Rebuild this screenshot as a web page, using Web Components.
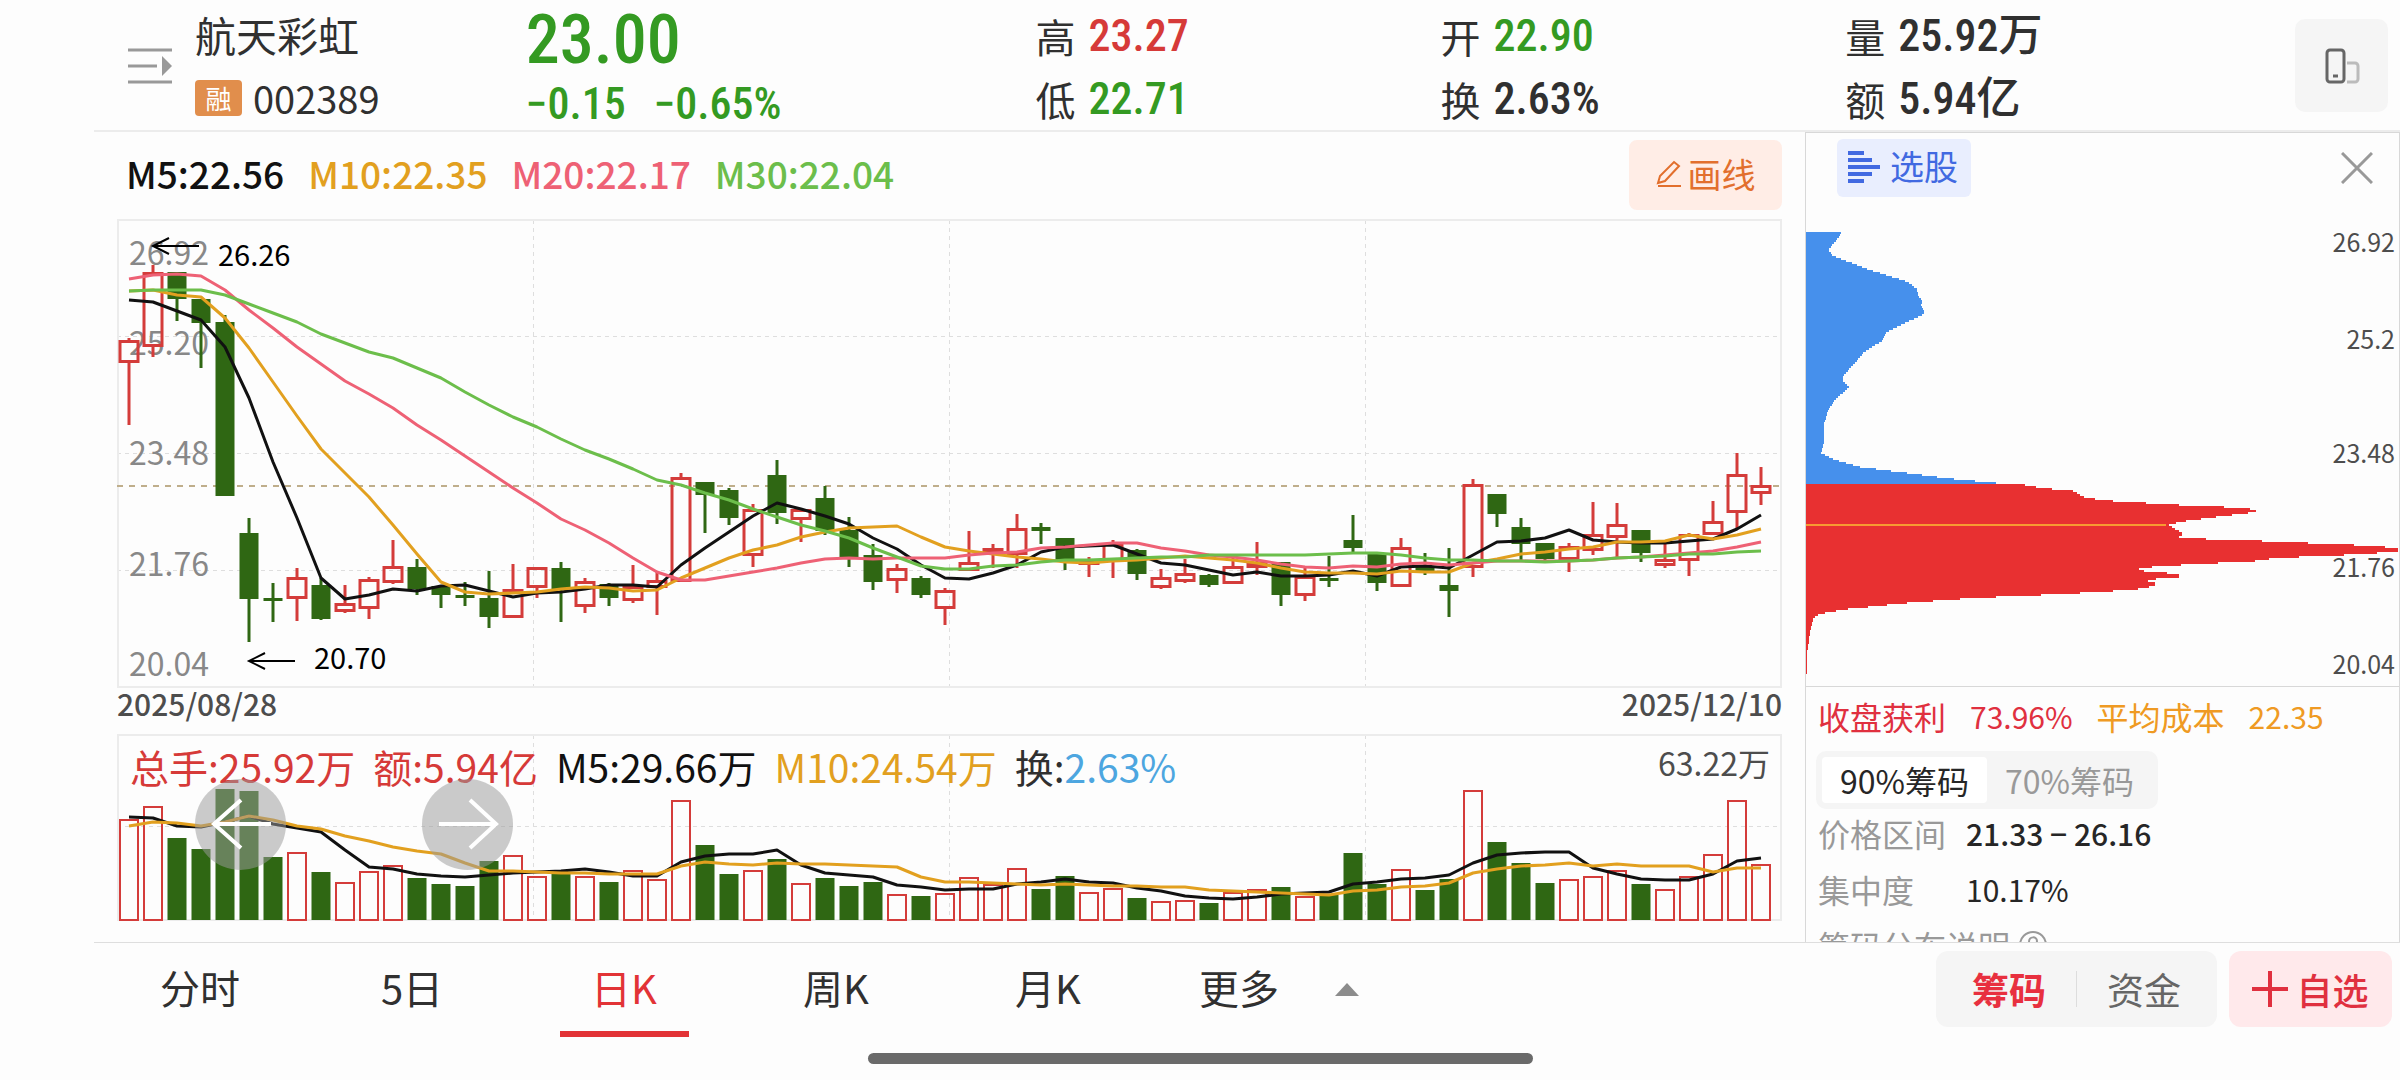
<!DOCTYPE html>
<html lang="zh-CN">
<head>
<meta charset="utf-8">
<meta name="viewport" content="width=device-width, initial-scale=1">
<title>航天彩虹 002389</title>
<style>
    html, body {
        margin: 0;
        height: 100%;
        background: #fdfdfd;
    }
    body {
        --up: #d63a38;
        --down: #349a22;
        --ma5: #111;
        --ma10: #e2a01f;
        --ma20: #ee6175;
        --ma30: #6cbe4b;
        --line: #ececec;
        --text: #303030;
        --num: "Roboto Condensed", "Liberation Sans Narrow", "Noto Sans CJK SC", sans-serif;
        font-family: "Noto Sans CJK SC", sans-serif;
        color: var(--text);
    }
</style>
</head>
<body>
<stock-app>
    <quote-header slot="header" name="航天彩虹" code="002389" price="23.00" change="−0.15" percent="−0.65%">
        <quote-pair label="高" second="低"><span slot="first" class="up">23.27</span><span slot="second">22.71</span></quote-pair>
        <quote-pair label="开" second="换"><span slot="first">22.90</span><span slot="second" class="flat">2.63%</span></quote-pair>
        <quote-pair label="量" second="额"><span slot="first" class="flat">25.92万</span><span slot="second" class="flat">5.94亿</span></quote-pair>
    </quote-header>
    <chart-toolbar slot="charts">
        <span style="color: var(--ma5)">M5:22.56</span>
        <span style="color: var(--ma10)">M10:22.35</span>
        <span style="color: var(--ma20)">M20:22.17</span>
        <span style="color: var(--ma30)">M30:22.04</span>
    </chart-toolbar>
    <k-line-chart slot="charts"></k-line-chart>
    <date-range slot="charts" from="2025/08/28" to="2025/12/10"></date-range>
    <volume-chart slot="charts"></volume-chart>
    <chip-panel slot="aside"></chip-panel>
    <period-bar slot="footer"></period-bar>
</stock-app>

<script>
// One row per trading day: [direction, high, body top, body bottom, low], chart units from the top edge
const CANDLES = [
    ['r',118,120,143,205], ['r',45,52,127,137], ['g',52,52,79,101], ['g',79,79,103,148], ['g',95,102,276,276],
    ['g',298,313,379,422], ['g',363,378,381,402], ['r',348,357,379,401], ['g',358,365,399,400], ['r',365,383,392,393],
    ['r',357,359,389,399], ['r',320,346,363,364], ['g',339,347,369,375], ['g',366,366,375,388], ['g',362,375,378,386],
    ['g',351,378,397,408], ['r',344,369,398,398], ['r',347,347,368,378], ['g',342,348,369,402], ['r',358,361,387,393],
    ['g',363,364,378,386], ['r',345,366,381,383], ['r',352,360,368,395], ['r',253,257,362,362], ['g',262,262,275,313],
    ['g',268,270,298,305], ['r',284,289,336,347], ['g',240,255,293,304], ['r',289,289,300,322], ['g',266,278,311,315],
    ['g',297,310,338,347], ['g',324,335,362,370], ['r',344,348,361,373], ['g',356,358,375,378], ['r',368,370,389,405],
    ['r',311,342,351,351], ['r',324,328,331,348], ['r',294,308,335,348], ['g',303,307,311,324], ['g',318,318,340,350],
    ['r',337,341,344,357], ['r',320,323,342,358], ['g',329,330,354,360], ['r',349,357,368,369], ['r',339,353,362,363],
    ['g',354,355,365,367], ['r',337,346,364,364], ['r',322,342,348,355], ['g',342,342,375,386], ['r',348,356,376,381],
    ['g',336,358,361,367], ['g',295,320,328,332], ['g',334,334,363,371], ['r',318,327,367,367], ['g',333,347,353,355],
    ['g',328,365,371,397], ['r',259,264,348,357], ['g',274,274,294,307], ['g',298,307,324,340], ['g',323,323,339,341],
    ['r',323,326,340,352], ['r',282,314,331,335], ['r',283,304,318,337], ['g',310,310,333,342], ['r',323,339,346,348],
    ['r',313,314,341,356], ['r',281,301,315,315], ['r',233,254,293,308], ['r',247,265,274,285],
];

const PRICE_MA = {
    ma5: [80,82,91,100,127,178,242,298,358,379,375,369,371,366,365,371,377,373,372,369,365,365,367,345,328,312,296,283,289,296,304,318,329,345,358,359,353,345,332,327,326,325,334,343,345,350,355,352,356,356,355,351,356,347,346,348,335,322,321,318,310,320,322,323,323,321,319,309,295],
    ma10: [71,70,75,77,98,128,162,196,229,253,277,305,334,362,372,374,373,372,369,367,368,371,370,358,348,338,330,325,317,312,308,307,306,317,327,331,334,337,339,342,343,341,340,338,336,338,340,343,348,352,353,353,354,351,352,352,343,339,334,332,329,327,322,322,321,315,319,315,309],
    ma20: [59,55,54,56,70,90,108,127,144,161,174,188,205,220,236,252,268,283,299,310,323,338,352,360,360,356,352,348,343,339,338,339,338,338,338,335,333,332,328,327,325,323,323,328,331,335,337,340,344,347,348,346,347,344,343,345,343,341,341,341,341,340,338,337,335,333,331,327,322],
    ma30: [71,70,70,70,75,84,93,102,114,123,132,138,148,158,172,185,197,207,219,230,239,249,260,265,273,280,289,297,305,311,318,328,337,346,349,349,346,345,342,340,340,339,338,337,337,335,335,335,335,335,334,333,333,335,338,340,340,341,341,342,341,340,338,337,336,334,334,332,331],
};

// Top of each volume bar; the base line is at 185
const VOLUMES = [84,71,103,114,54,56,122,117,137,147,136,130,143,149,151,126,120,141,139,141,147,135,144,65,110,139,135,124,148,143,151,147,159,161,158,142,149,133,154,141,157,153,163,166,165,168,157,154,152,161,160,118,149,134,155,144,55,107,128,148,144,141,135,149,154,141,119,65,129];

const VOLUME_MA = {
    ma5: [82,83,91,92,87,81,89,93,97,115,132,134,139,141,142,140,138,137,136,134,137,141,141,127,121,119,119,115,130,138,140,142,150,152,155,154,154,149,147,144,147,148,153,156,161,163,164,162,159,158,157,149,147,144,143,140,128,120,118,117,117,133,139,144,145,145,139,126,123],
    ma10: [91,87,88,91,87,81,85,91,94,101,106,112,116,119,128,136,136,137,138,138,139,139,139,131,127,129,130,128,129,129,130,131,132,142,147,147,148,149,150,149,150,151,151,152,152,155,156,157,158,159,160,156,155,152,151,148,138,134,131,130,128,131,129,131,131,131,137,133,133],
};

// Outline of the chip distribution: [width, y]
const CHIPS = [
    [35,100],[34,103],[22,117],[27,123],[64,137],[102,149],[111,156],[112,163],[116,167],[115,173],[119,179],[116,182],[93,193],
    [81,199],[76,208],[58,219],[49,230],[37,243],[37,248],[43,254],[28,268],[22,278],[18,291],[18,309],[15,320],[29,327],[54,334],
    [93,339],[138,345],[179,349],[200,351],[219,352],[235,355],[267,358],[280,365],[307,368],[373,372],[441,375],[450,378],[450,379],
    [410,384],[373,389],[363,392],[371,397],[378,401],[371,405],[400,406],[456,408],[548,412],[579,414],[592,416],[592,418],[560,421],
    [470,425],[449,428],[375,432],[331,435],[338,438],[361,440],[373,442],[373,444],[338,447],[349,450],[349,452],[340,455],[323,457],
    [258,461],[167,465],[101,470],[42,476],[13,481],[7,486],[4,499],[1,521],[1,542],
];
const CLOSE_Y = 352;

const dayX = (i) => 12 + i * 24;
const polyline = (values, name) =>
    `<polyline class="ma" style="stroke: var(--${name})" points="${values.map((y, i) => `${dayX(i)},${y}`).join(' ')}"/>`;

const chartStyles = `
    :host {
        display: block;
        position: relative;
        min-height: 0;
    }
    svg.plot {
        display: block;
        position: absolute;
        inset: 0;
        width: 100%;
        height: 100%;
        overflow: visible;
    }
    .frame { fill: none; stroke: var(--line); stroke-width: 2; }
    .grid { stroke: #dedede; stroke-width: 1; stroke-dasharray: 4 4; fill: none; }
    .ma { fill: none; stroke-width: 3; stroke-linejoin: round; }
    .g { fill: #2f6713; }
    .r { fill: none; stroke: #d43c3a; }
    .wick-g { stroke: #2f6713; stroke-width: 3; }
    .wick-r { stroke: #d43c3a; stroke-width: 3; }
`;

class BaseElement extends HTMLElement {
    constructor() {
        super();
        this.attachShadow({ mode: 'open' });
    }

    connectedCallback() {
        if (!this.initialized) {
            this.initialized = true;
            this.render();
            this.setupEventListeners();
        }
    }

    setupEventListeners() {}
}

class StockAppElement extends BaseElement {
    render() {
        this.shadowRoot.innerHTML = `
            <style>
                :host {
                    display: grid;
                    grid-template-rows: auto minmax(0, 1fr) auto;
                    height: 100%;
                    min-height: 720px;
                    overflow: hidden;
                }
                main {
                    display: grid;
                    grid-template-columns: minmax(0, 1fr) 595px;
                    min-height: 0;
                    margin-left: 94px;
                }
                .charts {
                    display: flex;
                    flex-direction: column;
                    min-height: 0;
                    padding: 0 23px 22px;
                }
            </style>
            <slot name="header"></slot>
            <main>
                <div class="charts"><slot name="charts"></slot></div>
                <slot name="aside"></slot>
            </main>
            <slot name="footer"></slot>
        `;
    }
}

class QuoteHeaderElement extends BaseElement {
    render() {
        const attr = (name) => this.getAttribute(name);
        this.shadowRoot.innerHTML = `
            <style>
                :host {
                    display: block;
                    margin-left: 94px;
                    border-bottom: 2px solid var(--line);
                }
                header {
                    display: grid;
                    grid-template-columns: 67px 331fr 510fr 1260fr auto;
                    box-sizing: border-box;
                    height: 130px;
                    padding: 0 12px 0 34px;
                }
                button {
                    border: 0;
                    padding: 0;
                    background: none;
                    cursor: pointer;
                }
                svg { display: block; }
                .menu { align-self: center; justify-self: start; }
                .name { padding-top: 2px; }
                h1, p { margin: 0; font-weight: 400; }
                h1 { font-size: 41px; line-height: 64px; }
                .code {
                    display: flex;
                    align-items: center;
                    gap: 11px;
                    font-size: 38px;
                    line-height: 64px;
                }
                .badge {
                    width: 47px;
                    border-radius: 4px;
                    background: #e18e4c;
                    color: #fff;
                    font-size: 26px;
                    line-height: 36px;
                    text-align: center;
                }
                .price {
                    color: var(--down);
                    font-family: var(--num);
                    font-weight: 500;
                }
                .now { font-size: 68px; line-height: 80px; }
                .diff { display: flex; gap: 28px; font-size: 44px; line-height: 48px; }
                .pairs { display: grid; grid-template-columns: 405fr 405fr 450fr; padding-top: 5px; }
                .rotate {
                    align-self: center;
                    width: 93px;
                    height: 93px;
                    border-radius: 10px;
                    background: #f5f5f5;
                }
                .rotate svg { margin: auto; }
            </style>
            <header>
                <button class="menu" type="button" aria-label="列表">
                    <svg width="44" height="36" viewBox="0 0 44 36"><path d="M0 2h44M0 18h29M0 34h44" stroke="#999" stroke-width="3"/><path d="M34 8l10 10-10 10z" fill="#999"/></svg>
                </button>
                <div class="name">
                    <h1>${attr('name')}</h1>
                    <p class="code"><span class="badge">融</span><span>${attr('code')}</span></p>
                </div>
                <div class="price">
                    <div class="now">${attr('price')}</div>
                    <div class="diff"><span>${attr('change')}</span><span>${attr('percent')}</span></div>
                </div>
                <div class="pairs"><slot></slot></div>
                <button class="rotate" type="button" aria-label="竖屏">
                    <svg width="36" height="36" viewBox="0 0 36 36" fill="none"><rect x="3" y="2" width="17" height="32" rx="3" stroke="#666" stroke-width="3"/><path d="M9 28h5" stroke="#666" stroke-width="3"/><path d="M23 15h8a3 3 0 0 1 3 3v13a3 3 0 0 1-3 3h-8" stroke="#bbb" stroke-width="3"/></svg>
                </button>
            </header>
        `;
    }
}

class QuotePairElement extends BaseElement {
    render() {
        this.shadowRoot.innerHTML = `
            <style>
                :host { display: block; color: var(--text); }
                div {
                    display: flex;
                    gap: 13px;
                    font-size: 40px;
                    line-height: 63px;
                }
                slot {
                    font-family: var(--num);
                    font-weight: 500;
                    font-size: 44px;
                    color: var(--down);
                }
                ::slotted(.up) { color: var(--up); }
                ::slotted(.flat) { color: var(--text); }
            </style>
            <div><span>${this.getAttribute('label')}</span><slot name="first"></slot></div>
            <div><span>${this.getAttribute('second')}</span><slot name="second"></slot></div>
        `;
    }
}

class ChartToolbarElement extends BaseElement {
    render() {
        this.shadowRoot.innerHTML = `
            <style>
                :host {
                    display: flex;
                    justify-content: space-between;
                    align-items: flex-start;
                    padding: 8px 0 10px 9px;
                }
                .legend {
                    display: flex;
                    gap: 24px;
                    font-size: 37px;
                    line-height: 66px;
                    font-weight: 500;
                    white-space: nowrap;
                }
                button {
                    display: flex;
                    align-items: center;
                    justify-content: center;
                    gap: 6px;
                    width: 153px;
                    height: 70px;
                    border: 0;
                    border-radius: 8px;
                    padding: 0 0 3px;
                    background: #ffede6;
                    color: #e26f2d;
                    font: 34px "Noto Sans CJK SC", sans-serif;
                }
            </style>
            <div class="legend"><slot></slot></div>
            <button type="button">
                <svg width="26" height="28" viewBox="0 0 26 28" fill="none" stroke="currentColor" stroke-width="2"><path d="M18 2l5 4L9 21l-7 2 2-7z"/><path d="M2 26h23"/></svg>
                <span>画线</span>
            </button>
        `;
    }
}

class KLineChartElement extends BaseElement {
    candle([kind, high, top, bottom, low], i) {
        const x = dayX(i);
        if (kind === 'g') {
            return `<path class="wick-g" d="M${x} ${high}V${low}"/><rect class="g" x="${x - 9.5}" y="${top}" width="19" height="${bottom - top}"/>`;
        }
        const height = Math.max(bottom - top - 3, 1);
        return `<path class="wick-r" d="M${x} ${high}V${top + 1}M${x} ${bottom - 1}V${low}"/>
            <rect class="r" stroke-width="3" x="${x - 9}" y="${top + 1.5}" width="18" height="${height}"/>`;
    }

    render() {
        const labels = [['26.92', 31], ['25.20', 121], ['23.48', 231], ['21.76', 342], ['20.04', 442]];
        this.shadowRoot.innerHTML = `
            <style>
                ${chartStyles}
                :host { flex: 467 1 0; }
                .label {
                    position: absolute;
                    left: 12px;
                    transform: translateY(-50%);
                    font-size: 32px;
                    line-height: 32px;
                    color: #888;
                }
                .mark { font-size: 29px; color: #000; }
                .close { stroke: #bfae8b; stroke-width: 2; stroke-dasharray: 6 6; }
                .arrow { fill: none; stroke: #000; stroke-width: 2; }
            </style>
            <svg class="plot" viewBox="0 0 1665 467" preserveAspectRatio="none" aria-hidden="true">
                <path class="grid" d="M0 116.500H1664M0 233.500H1664M0 350.500H1664M416.500 0V467M832.500 0V467M1248.500 0V467"/>
                <rect class="frame" x="1" y="0" width="1663" height="467"/>
                <path class="close" d="M0 266H1664"/>
            </svg>
            ${labels.map(([text, y]) => `<span class="label" style="top: ${y}px">${text}</span>`).join('')}
            <svg class="plot" viewBox="0 0 1665 467" preserveAspectRatio="none" role="img" aria-label="日K">
                ${CANDLES.map((c, i) => this.candle(c, i)).join('')}
                ${['ma5', 'ma10', 'ma20', 'ma30'].map((k) => polyline(PRICE_MA[k], k)).join('')}
                <path class="arrow" d="M82 26H36M52 18L36 26l16 8M178 441H132M148 433l-16 8 16 8"/>
            </svg>
            <span class="label mark" style="left: 101px; top: 33px">26.26</span>
            <span class="label mark" style="left: 197px; top: 436px">20.70</span>
        `;
    }
}

class DateRangeElement extends BaseElement {
    render() {
        this.shadowRoot.innerHTML = `
            <style>
                :host {
                    display: flex;
                    justify-content: space-between;
                    height: 48px;
                    font-size: 30px;
                    line-height: 32px;
                    font-weight: 500;
                    color: #4d4d4d;
                }
            </style>
            <time>${this.getAttribute('from')}</time>
            <time>${this.getAttribute('to')}</time>
        `;
    }
}

class VolumeChartElement extends BaseElement {
    bar(top, i) {
        const x = dayX(i);
        if (CANDLES[i][0] === 'g') {
            return `<rect class="g" x="${x - 9.5}" y="${top}" width="19" height="${185 - top}"/>`;
        }
        return `<rect class="r" stroke-width="2" x="${x - 9}" y="${top + 1}" width="18" height="${184 - top}"/>`;
    }

    render() {
        this.shadowRoot.innerHTML = `
            <style>
                ${chartStyles}
                :host { flex: 185 1 0; }
                .legend {
                    position: relative;
                    display: flex;
                    gap: 18px;
                    padding: 8px 12px 0 13px;
                    font-size: 39px;
                    line-height: 46px;
                    white-space: nowrap;
                }
                .up { color: var(--up); }
                .legend b { font-weight: 400; color: #4da6e0; }
                .max {
                    margin-left: auto;
                    font-size: 32px;
                    line-height: 38px;
                    color: #4d4d4d;
                }
                .pan {
                    position: absolute;
                    top: 44px;
                    width: 91px;
                    height: 91px;
                    border: 0;
                    border-radius: 50%;
                    padding: 0;
                    background: rgba(155, 155, 155, 0.52);
                    fill: none;
                    stroke: #fff;
                    stroke-width: 4;
                }
                .pan svg { display: block; }
                .prev { left: 78px; }
                .next { left: 305px; }
            </style>
            <svg class="plot" viewBox="0 0 1665 185" preserveAspectRatio="none" role="img" aria-label="成交量">
                <path class="grid" d="M0 91.500H1664M416.500 0V185M832.500 0V185M1248.500 0V185"/>
                <rect class="frame" x="1" y="0" width="1663" height="185"/>
                ${VOLUMES.map((v, i) => this.bar(v, i)).join('')}
                ${['ma5', 'ma10'].map((k) => polyline(VOLUME_MA[k], k)).join('')}
            </svg>
            <div class="legend">
                <span class="up">总手:25.92万</span>
                <span class="up">额:5.94亿</span>
                <span style="color: var(--ma5)">M5:29.66万</span>
                <span style="color: var(--ma10)">M10:24.54万</span>
                <span>换:<b>2.63%</b></span>
                <span class="max">63.22万</span>
            </div>
            <button class="pan prev" type="button" aria-label="向左"><svg viewBox="0 0 91 91"><path d="M76 45H19M46 21L19 45l27 24"/></svg></button>
            <button class="pan next" type="button" aria-label="向右"><svg viewBox="0 0 91 91"><path d="M17 45h57M48 21l26 24-26 24"/></svg></button>
        `;
    }
}

class ChipPanelElement extends BaseElement {
    // Steps the outline in rows two units high
    area(from, to) {
        let d = `M0 ${from}`;
        for (let y = from; y < to; y += 2) {
            const k = CHIPS.findIndex((p) => p[1] > y);
            const [w1, y1] = CHIPS[k];
            const [w0, y0] = CHIPS[Math.max(k - 1, 0)];
            const w = y1 === y0 ? w0 : Math.round(w0 + (w1 - w0) * (y - y0) / (y1 - y0));
            d += `H${w}v2`;
        }
        return d + 'H0Z';
    }

    render() {
        const labels = [['26.92', 108], ['25.2', 205], ['23.48', 319], ['21.76', 433], ['20.04', 530]];
        this.shadowRoot.innerHTML = `
            <style>
                :host {
                    display: flex;
                    flex-direction: column;
                    min-height: 0;
                    overflow: hidden;
                    border: 1px solid #d8d8d8;
                    border-width: 1px 1px 0;
                    font-size: 32px;
                }
                button {
                    border: 0;
                    padding: 0;
                    background: none;
                    font: inherit;
                    color: inherit;
                    cursor: pointer;
                }
                svg { display: block; flex: none; }
                .plot {
                    position: relative;
                    flex: 0 0 553px;
                    border-bottom: 1px solid #d8d8d8;
                }
                .plot > svg {
                    position: absolute;
                    inset: 0;
                    width: 100%;
                    height: 100%;
                }
                .top {
                    position: relative;
                    display: flex;
                    justify-content: space-between;
                    align-items: center;
                    padding: 6px 26px 0 31px;
                }
                .pick {
                    display: flex;
                    align-items: center;
                    gap: 10px;
                    height: 58px;
                    padding: 0 13px 2px 11px;
                    border-radius: 6px;
                    background: #e9eefe;
                    color: #4169e1;
                    font-size: 34px;
                    line-height: 52px;
                }
                .pick span { padding-bottom: 2px; }
                .plot span.y {
                    position: absolute;
                    right: 4px;
                    transform: translateY(-50%);
                    font-size: 25px;
                    line-height: 26px;
                    color: #4d4d4d;
                }
                .detail {
                    flex: 1 1 0;
                    min-height: 0;
                    overflow: hidden;
                    padding: 0 12px;
                }
                .stats { display: flex; gap: 24px; margin: 0; line-height: 58px; white-space: nowrap; }
                .stats span:nth-child(-n+2) { color: #e0303f; }
                .stats span:nth-child(n+3) { color: #ef9a23; }
                .stats span:nth-child(2n), dd { font-size: 30px; }
                .switch {
                    display: flex;
                    width: max-content;
                    margin: 6px 0 0 -2px;
                    padding: 6px;
                    border-radius: 10px;
                    background: #f5f5f5;
                }
                .switch button {
                    width: 165px;
                    height: 46px;
                    border-radius: 4px;
                    line-height: 42px;
                    color: #999;
                }
                .switch .on { background: #fff; color: #262626; }
                dl {
                    display: grid;
                    grid-template-columns: 124px 1fr;
                    gap: 8px 24px;
                    margin: 0;
                    line-height: 48px;
                }
                dt { color: #999; white-space: nowrap; }
                dd { margin: 0; color: #262626; }
                dd.strong { font-weight: 500; }
                .note { display: flex; align-items: center; gap: 8px; margin: 8px 0 0; line-height: 48px; color: #999; }
            </style>
            <section class="plot">
                <svg viewBox="0 1 593 553" preserveAspectRatio="none" aria-hidden="true">
                    <path d="${this.area(100, CLOSE_Y)}" fill="#4690ec"/>
                    <path d="${this.area(CLOSE_Y, 542)}" fill="#e83031"/>
                    <path d="M0 393H360" stroke="#f79a32" stroke-width="2"/>
                </svg>
                <div class="top">
                    <button class="pick" type="button">
                        <svg width="32" height="32" viewBox="0 0 32 32" stroke="currentColor" stroke-width="4"><path d="M0 2h16M0 9h24M0 16h32M0 23h24M0 30h16"/></svg>
                        <span>选股</span>
                    </button>
                    <button type="button" aria-label="关闭">
                        <svg width="32" height="32" viewBox="0 0 32 32" stroke="#999" stroke-width="3"><path d="M1 1l30 30M31 1L1 31"/></svg>
                    </button>
                </div>
                ${labels.map(([text, y]) => `<span class="y" style="top: ${y}px">${text}</span>`).join('')}
            </section>
            <section class="detail">
                <p class="stats"><span>收盘获利</span><span>73.96%</span><span>平均成本</span><span>22.35</span></p>
                <div class="switch">
                    <button class="on" type="button" aria-pressed="true">90%筹码</button>
                    <button type="button" aria-pressed="false">70%筹码</button>
                </div>
                <dl>
                    <dt>价格区间</dt><dd class="strong">21.33 − 26.16</dd>
                    <dt>集中度</dt><dd>10.17%</dd>
                </dl>
                <p class="note"><span>筹码分布说明</span>
                    <svg width="30" height="30" viewBox="0 0 30 30" fill="none" stroke="#999" stroke-width="2"><circle cx="15" cy="15" r="13"/><path d="M11 12c0-6 8-6 8-1 0 4-4 3-4 7M15 20v3"/></svg>
                </p>
            </section>
        `;
    }

    setupEventListeners() {
        const buttons = [...this.shadowRoot.querySelectorAll('.switch button')];
        buttons.forEach((button) => button.addEventListener('click', () => {
            buttons.forEach((b) => {
                b.classList.toggle('on', b === button);
                b.setAttribute('aria-pressed', b === button);
            });
        }));
    }
}

class PeriodBarElement extends BaseElement {
    render() {
        const periods = ['分时', '5日', '日K', '周K', '月K'];
        this.shadowRoot.innerHTML = `
            <style>
                :host { display: block; }
                .bar {
                    display: flex;
                    margin-left: 94px;
                    border-top: 1px solid #dedede;
                    padding-right: 8px;
                    height: 94px;
                }
                button {
                    border: 0;
                    padding: 0;
                    background: none;
                    font: 40px "Noto Sans CJK SC", sans-serif;
                    color: var(--text);
                    cursor: pointer;
                }
                nav { display: flex; }
                nav button {
                    display: flex;
                    flex-direction: column;
                    align-items: center;
                    justify-content: space-between;
                    width: 212px;
                    line-height: 88px;
                }
                nav .on { color: #e23336; }
                nav .on::after {
                    content: '';
                    width: 129px;
                    height: 6px;
                    background: #e23336;
                }
                nav .more {
                    flex-direction: row;
                    justify-content: center;
                    align-items: flex-start;
                    width: 250px;
                    gap: 56px;
                }
                .more svg { margin-top: 40px; }
                .actions {
                    display: flex;
                    align-items: flex-start;
                    gap: 12px;
                    margin-left: auto;
                    padding-top: 8px;
                }
                .segment {
                    display: flex;
                    align-items: center;
                    padding: 0 6px;
                    border-radius: 12px;
                    background: #f5f5f5;
                }
                .segment button {
                    width: 134px;
                    font-size: 37px;
                    line-height: 76px;
                    color: #666;
                }
                .segment i { width: 1px; height: 36px; background: #ddd; }
                .segment .on { color: #e8303f; font-weight: 700; }
                .add {
                    display: flex;
                    align-items: center;
                    justify-content: center;
                    gap: 8px;
                    width: 163px;
                    border-radius: 12px;
                    background: #ffe9eb;
                    color: #e0303f;
                    font-size: 36px;
                    font-weight: 500;
                    line-height: 76px;
                }
                .home {
                    width: 665px;
                    height: 11px;
                    margin: 16px auto;
                    border-radius: 6px;
                    background: #6a6a6a;
                }
            </style>
            <div class="bar">
                <nav>
                    ${periods.map((p) => `<button type="button"${p === '日K' ? ' class="on" aria-current="true"' : ''}>${p}</button>`).join('')}
                    <button class="more" type="button">更多 <svg width="24" height="13" viewBox="0 0 24 13"><path d="M12 0l12 13H0z" fill="#8c8c8c"/></svg></button>
                </nav>
                <div class="actions">
                    <div class="segment">
                        <button class="on" type="button">筹码</button><i></i><button type="button">资金</button>
                    </div>
                    <button class="add" type="button">
                        <svg width="36" height="36" viewBox="0 0 36 36" stroke="currentColor" stroke-width="4"><path d="M0 18h36M18 0v36"/></svg>
                        <span>自选</span>
                    </button>
                </div>
            </div>
            <div class="home"></div>
        `;
    }

    setupEventListeners() {
        const tabs = [...this.shadowRoot.querySelectorAll('nav button:not(.more)')];
        tabs.forEach((tab) => tab.addEventListener('click', () => {
            tabs.forEach((t) => t.classList.toggle('on', t === tab));
        }));
    }
}

// Register custom elements
customElements.define('stock-app', StockAppElement);
customElements.define('quote-header', QuoteHeaderElement);
customElements.define('quote-pair', QuotePairElement);
customElements.define('chart-toolbar', ChartToolbarElement);
customElements.define('k-line-chart', KLineChartElement);
customElements.define('date-range', DateRangeElement);
customElements.define('volume-chart', VolumeChartElement);
customElements.define('chip-panel', ChipPanelElement);
customElements.define('period-bar', PeriodBarElement);
</script>
</body>
</html>
